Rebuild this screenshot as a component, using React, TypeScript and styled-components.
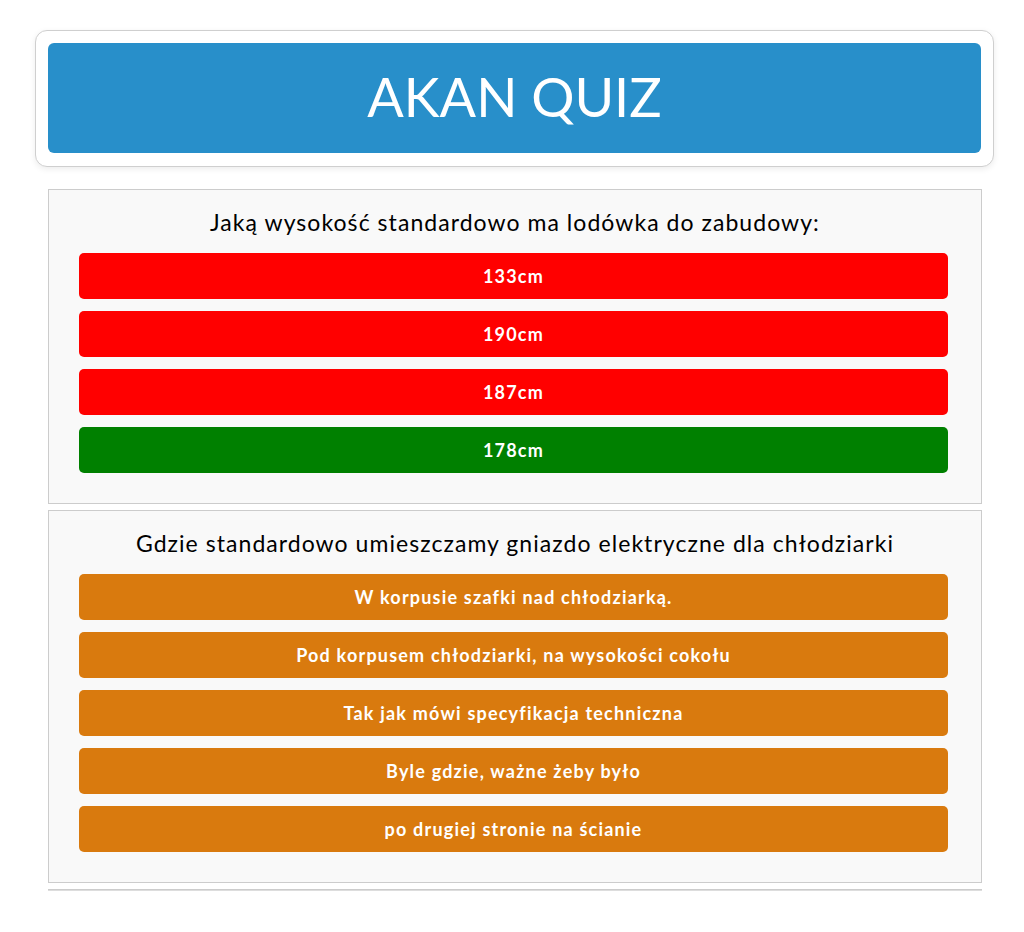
import React from "react";
import styled, { createGlobalStyle } from "styled-components";

const Global = createGlobalStyle`
  html, body { margin: 0; padding: 0; background: #fff; }
  body { font-family: "Lato", "Open Sans", sans-serif; }
`;

const Page = styled.div`
  width: 959px;
  margin: 30px 0 0 35px;
  display: flex;
  flex-direction: column;
`;

const HeaderCard = styled.header`
  border: 1px solid #cfcfcf;
  border-radius: 12px;
  padding: 12px 12px 13px;
  background: #fff;
  box-shadow: 0 2px 6px rgba(0, 0, 0, 0.08);
  margin-bottom: 22px;
`;

const Banner = styled.div`
  height: 110px;
  border-radius: 6px;
  background: #288fca;
  display: flex;
  align-items: center;
  justify-content: center;
`;

const Title = styled.h1`
  margin: 0 0 4px;
  color: #fff;
  font-size: 54px;
  font-weight: 400;
`;

const QuestionCard = styled.section`
  margin: 0 12px 6px 13px;
  border: 1px solid #cccccc;
  background: #f9f9f9;
  padding: 17px 0 30px;
  display: flex;
  flex-direction: column;
`;

const Question = styled.h2`
  margin: 0 0 16px;
  font-size: 23px;
  line-height: 30px;
  font-weight: 400;
  letter-spacing: 1.05px;
  color: #000;
  text-align: center;
`;

const Answers = styled.div`
  padding: 0 33px 0 30px;
  display: flex;
  flex-direction: column;
  gap: 12px;
`;

type Variant = "wrong" | "right" | "neutral";
const colors: Record<Variant, string> = {
  wrong: "#ff0000",
  right: "#008000",
  neutral: "#d97a0e",
};

const Answer = styled.button<{ $variant: Variant }>`
  height: 46px;
  border: none;
  border-radius: 5px;
  background: ${(p) => colors[p.$variant]};
  color: #fff;
  font-family: "Lato", "Open Sans", sans-serif;
  font-size: 18px;
  font-weight: 700;
  letter-spacing: 1.2px;
  cursor: pointer;
`;

const EndRule = styled.div`
  margin: 0 12px 0 13px;
  border-top: 1px solid #cccccc;
  border-bottom: 1px solid #dddddd;
`;

const questions: { q: string; a: { t: string; v: Variant }[] }[] = [
  {
    q: "Jaką wysokość standardowo ma lodówka do zabudowy:",
    a: [
      { t: "133cm", v: "wrong" },
      { t: "190cm", v: "wrong" },
      { t: "187cm", v: "wrong" },
      { t: "178cm", v: "right" },
    ],
  },
  {
    q: "Gdzie standardowo umieszczamy gniazdo elektryczne dla chłodziarki",
    a: [
      { t: "W korpusie szafki nad chłodziarką.", v: "neutral" },
      { t: "Pod korpusem chłodziarki, na wysokości cokołu", v: "neutral" },
      { t: "Tak jak mówi specyfikacja techniczna", v: "neutral" },
      { t: "Byle gdzie, ważne żeby było", v: "neutral" },
      { t: "po drugiej stronie na ścianie", v: "neutral" },
    ],
  },
];

export default function App() {
  return (
    <>
      <Global />
      <Page>
        <HeaderCard>
          <Banner>
            <Title>AKAN QUIZ</Title>
          </Banner>
        </HeaderCard>
        {questions.map((q) => (
          <QuestionCard key={q.q}>
            <Question>{q.q}</Question>
            <Answers>
              {q.a.map((a) => (
                <Answer key={a.t} $variant={a.v}>
                  {a.t}
                </Answer>
              ))}
            </Answers>
          </QuestionCard>
        ))}
        <EndRule />
      </Page>
    </>
  );
}
